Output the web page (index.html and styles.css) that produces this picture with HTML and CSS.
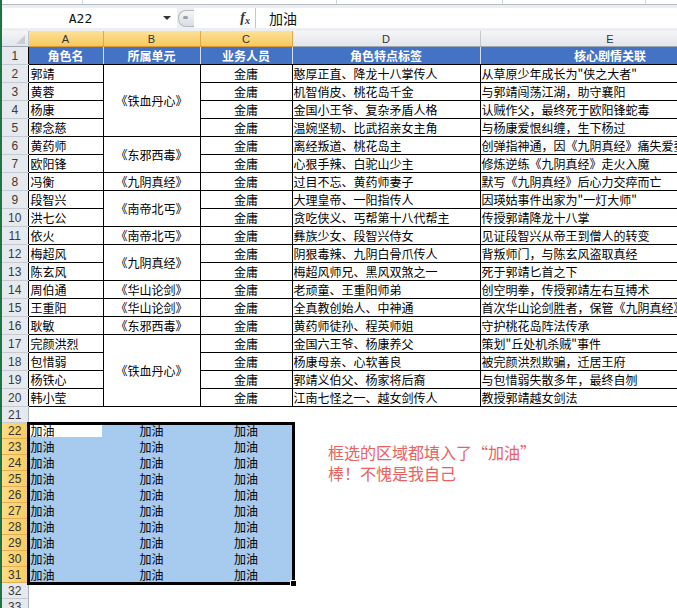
FILE: index.html
```html
<!DOCTYPE html>
<html lang="zh-CN">
<head>
  <meta charset="UTF-8">
  <title>金庸角色表</title>
  <link rel="stylesheet" href="styles.css">
</head>
<body>
  <div class="app">
    <div class="ribbon">
      <span class="seg s1"></span><span class="seg s2"></span><span class="seg s3"></span><span class="seg s4"></span>
    </div>
    <div class="fbar">
      <div class="namebox"><span class="ref">A22</span><span class="caret"></span></div>
      <div class="grip"><span class="dot"></span></div>
      <div class="fx"><i>f</i><i class="x">x</i></div>
      <div class="formula">加油</div>
    </div>

    <div class="sheet">
      <table class="grid">
        <colgroup>
          <col class="w-rh"><col class="w-a"><col class="w-b"><col class="w-c"><col class="w-d"><col class="w-e">
        </colgroup>
        <tr class="cols">
          <th class="corner"><span class="tri"></span></th>
          <th class="ch on">A</th><th class="ch on">B</th><th class="ch on">C</th><th class="ch">D</th><th class="ch">E</th>
        </tr>
        <tr class="d hd">
          <th class="rh">1</th><td>角色名</td><td>所属单元</td><td>业务人员</td><td>角色特点标签</td><td>核心剧情关联</td>
        </tr>
        <tr class="d"><th class="rh">2</th><td class="a">郭靖</td><td class="b" rowspan="4">《铁血丹心》</td><td class="c">金庸</td><td class="t">憨厚正直、降龙十八掌传人</td><td class="t">从草原少年成长为"侠之大者"</td></tr>
        <tr class="d"><th class="rh">3</th><td class="a">黄蓉</td><td class="c">金庸</td><td class="t">机智俏皮、桃花岛千金</td><td class="t">与郭靖闯荡江湖，助守襄阳</td></tr>
        <tr class="d"><th class="rh">4</th><td class="a">杨康</td><td class="c">金庸</td><td class="t">金国小王爷、复杂矛盾人格</td><td class="t">认贼作父，最终死于欧阳锋蛇毒</td></tr>
        <tr class="d"><th class="rh">5</th><td class="a">穆念慈</td><td class="c">金庸</td><td class="t">温婉坚韧、比武招亲女主角</td><td class="t">与杨康爱恨纠缠，生下杨过</td></tr>
        <tr class="d"><th class="rh">6</th><td class="a">黄药师</td><td class="b" rowspan="2">《东邪西毒》</td><td class="c">金庸</td><td class="t">离经叛道、桃花岛主</td><td class="t">创弹指神通，因《九阴真经》痛失爱妻</td></tr>
        <tr class="d"><th class="rh">7</th><td class="a">欧阳锋</td><td class="c">金庸</td><td class="t">心狠手辣、白驼山少主</td><td class="t">修炼逆练《九阴真经》走火入魔</td></tr>
        <tr class="d"><th class="rh">8</th><td class="a">冯衡</td><td class="b">《九阴真经》</td><td class="c">金庸</td><td class="t">过目不忘、黄药师妻子</td><td class="t">默写《九阴真经》后心力交瘁而亡</td></tr>
        <tr class="d"><th class="rh">9</th><td class="a">段智兴</td><td class="b" rowspan="2">《南帝北丐》</td><td class="c">金庸</td><td class="t">大理皇帝、一阳指传人</td><td class="t">因瑛姑事件出家为"一灯大师"</td></tr>
        <tr class="d"><th class="rh">10</th><td class="a">洪七公</td><td class="c">金庸</td><td class="t">贪吃侠义、丐帮第十八代帮主</td><td class="t">传授郭靖降龙十八掌</td></tr>
        <tr class="d"><th class="rh">11</th><td class="a">依火</td><td class="b">《南帝北丐》</td><td class="c">金庸</td><td class="t">彝族少女、段智兴侍女</td><td class="t">见证段智兴从帝王到僧人的转变</td></tr>
        <tr class="d"><th class="rh">12</th><td class="a">梅超风</td><td class="b" rowspan="2">《九阴真经》</td><td class="c">金庸</td><td class="t">阴狠毒辣、九阴白骨爪传人</td><td class="t">背叛师门，与陈玄风盗取真经</td></tr>
        <tr class="d"><th class="rh">13</th><td class="a">陈玄风</td><td class="c">金庸</td><td class="t">梅超风师兄、黑风双煞之一</td><td class="t">死于郭靖匕首之下</td></tr>
        <tr class="d"><th class="rh">14</th><td class="a">周伯通</td><td class="b">《华山论剑》</td><td class="c">金庸</td><td class="t">老顽童、王重阳师弟</td><td class="t">创空明拳，传授郭靖左右互搏术</td></tr>
        <tr class="d"><th class="rh">15</th><td class="a">王重阳</td><td class="b">《华山论剑》</td><td class="c">金庸</td><td class="t">全真教创始人、中神通</td><td class="t">首次华山论剑胜者，保管《九阴真经》</td></tr>
        <tr class="d"><th class="rh">16</th><td class="a">耿敏</td><td class="b">《东邪西毒》</td><td class="c">金庸</td><td class="t">黄药师徒孙、程英师姐</td><td class="t">守护桃花岛阵法传承</td></tr>
        <tr class="d"><th class="rh">17</th><td class="a">完颜洪烈</td><td class="b" rowspan="4">《铁血丹心》</td><td class="c">金庸</td><td class="t">金国六王爷、杨康养父</td><td class="t">策划"丘处机杀贼"事件</td></tr>
        <tr class="d"><th class="rh">18</th><td class="a">包惜弱</td><td class="c">金庸</td><td class="t">杨康母亲、心软善良</td><td class="t">被完颜洪烈欺骗，迁居王府</td></tr>
        <tr class="d"><th class="rh">19</th><td class="a">杨铁心</td><td class="c">金庸</td><td class="t">郭靖义伯父、杨家将后裔</td><td class="t">与包惜弱失散多年，最终自刎</td></tr>
        <tr class="d"><th class="rh">20</th><td class="a">韩小莹</td><td class="c">金庸</td><td class="t">江南七怪之一、越女剑传人</td><td class="t">教授郭靖越女剑法</td></tr>

        <tr class="e"><th class="rh">21</th><td></td><td></td><td></td><td></td><td></td></tr>
        <tr class="e"><th class="rh on">22</th><td class="s a active">加油</td><td class="s c">加油</td><td class="s c">加油</td><td></td><td></td></tr>
        <tr class="e"><th class="rh on">23</th><td class="s a">加油</td><td class="s c">加油</td><td class="s c">加油</td><td></td><td></td></tr>
        <tr class="e"><th class="rh on">24</th><td class="s a">加油</td><td class="s c">加油</td><td class="s c">加油</td><td></td><td></td></tr>
        <tr class="e"><th class="rh on">25</th><td class="s a">加油</td><td class="s c">加油</td><td class="s c">加油</td><td></td><td></td></tr>
        <tr class="e"><th class="rh on">26</th><td class="s a">加油</td><td class="s c">加油</td><td class="s c">加油</td><td></td><td></td></tr>
        <tr class="e"><th class="rh on">27</th><td class="s a">加油</td><td class="s c">加油</td><td class="s c">加油</td><td></td><td></td></tr>
        <tr class="e"><th class="rh on">28</th><td class="s a">加油</td><td class="s c">加油</td><td class="s c">加油</td><td></td><td></td></tr>
        <tr class="e"><th class="rh on">29</th><td class="s a">加油</td><td class="s c">加油</td><td class="s c">加油</td><td></td><td></td></tr>
        <tr class="e"><th class="rh on">30</th><td class="s a">加油</td><td class="s c">加油</td><td class="s c">加油</td><td></td><td></td></tr>
        <tr class="e"><th class="rh on">31</th><td class="s a">加油</td><td class="s c">加油</td><td class="s c">加油</td><td></td><td></td></tr>
        <tr class="e"><th class="rh">32</th><td></td><td></td><td></td><td></td><td></td></tr>
        <tr class="e"><th class="rh">33</th><td></td><td></td><td></td><td></td><td></td></tr>
      </table>

      <!-- selection frame around A22:C31 with its fill handle -->
      <div class="selection"><span class="handle"></span></div>

      <!-- floating text box -->
      <div class="note">框选的区域都填入了“加油”<br>棒！不愧是我自己</div>
    </div>
  </div>
</body>
</html>
```

FILE: styles.css
```css
body {
  margin: 0;
  background: #fff;
  overflow: hidden;
  font-family: "Noto Sans CJK SC", sans-serif;
}
.app {
  border-left: 2px solid #217346;
  height: 608px;
  overflow: hidden;
}

/* strip left from the ribbon */
.ribbon {
  display: flex;
  height: 4px;
  border-bottom: 1px solid #b6bcc4;
}
.seg {
  border-right: 1px solid #cfd4da;
}
.s1 { width: 80px; }
.s2 { width: 253px; }
.s3 { width: 165px; }
.s4 { width: 142px; }

/* formula bar */
.fbar {
  display: flex;
  align-items: stretch;
  height: 20px;
  padding: 3px 0 3px 1px;
  background: #eceef1;
}
.namebox {
  display: flex;
  align-items: center;
  width: 174px;
  background: #fff;
}
.ref {
  width: 155px;
  text-align: center;
  font-family: "DejaVu Sans Mono", monospace;
  font-size: 13px;
  color: #111;
}
.caret {
  width: 0;
  height: 0;
  margin-left: 5px;
  border-left: 4px solid transparent;
  border-right: 4px solid transparent;
  border-top: 4px solid #333;
}
.grip {
  position: relative;
  width: 15px;
  margin: 2px 0 1px 1px;
  border: 1px solid #b4bac2;
  border-right: none;
  border-radius: 8px 0 0 8px;
  background: linear-gradient(#f6f7f8, #d9dde2);
}
.grip .dot {
  position: absolute;
  left: 4px;
  top: 5px;
  width: 5px;
  height: 3px;
  border-radius: 2px;
  background: #9aa1aa;
}
.fx {
  width: 56px;
  display: flex;
  justify-content: flex-end;
  align-items: center;
  padding-right: 5px;
  background: #fff;
  font-family: "Liberation Serif", serif;
  font-size: 14px;
  font-weight: bold;
  color: #333;
  border-right: 1px solid #c4c9cf;
}
.fx .x {
  font-size: 10px;
  margin-top: 4px;
}
.formula {
  flex: 1;
  background: #fff;
  padding-left: 13px;
  font-size: 14px;
  line-height: 20px;
  color: #111;
}

/* worksheet */
.sheet {
  position: relative;
}
.grid {
  table-layout: fixed;
  width: 738px;
  border-collapse: collapse;
  font-size: 12px;
  color: #000;
}
.w-rh { width: 26px; }
.w-a { width: 75px; }
.w-b { width: 97px; }
.w-c { width: 92px; }
.w-d { width: 188px; }
.w-e { width: 260px; }

.grid td {
  padding: 0;
  white-space: nowrap;
  overflow: hidden;
}

.cols th {
  height: 15px;
  padding: 0;
  font-family: "Liberation Sans", sans-serif;
  font-size: 11px;
  font-weight: normal;
  color: #333;
  background: linear-gradient(#f4f5f7, #e2e5ea);
  border-right: 1px solid #c3c8cf;
  border-bottom: 1px solid #9ea6b0;
}
.cols th.on {
  background: linear-gradient(#fbe19a, #f6c95c);
  border-right-color: #e0a94c;
  border-bottom-color: #d99a35;
}
.corner {
  position: relative;
}
.tri {
  position: absolute;
  right: 3px;
  bottom: 2px;
  border-left: 9px solid transparent;
  border-bottom: 9px solid #c9ced5;
}

.rh {
  padding: 0;
  font-family: "Liberation Sans", sans-serif;
  font-size: 12px;
  font-weight: normal;
  color: #3a3a3a;
  background: #e6e9ee;
  border-bottom: 1px solid #c6cbd2;
  border-right: 1px solid #a9b1bc;
}
.rh.on {
  background: linear-gradient(90deg, #fbdc85, #f7cb5f);
  color: #333;
  border-bottom-color: #e4b056;
  border-right-color: #c98f2c;
}

/* rows 1-20: bordered table */
.d {
  height: 18px;
}
.d td {
  border: 1px solid #000;
}
.d .rh {
  border-right-color: #000;
}
.hd td {
  background: #4472c4;
  color: #fff;
  font-weight: bold;
  text-align: center;
  border-color: #000 #d8e0ef #000 #d8e0ef;
}
.a { padding-left: 2px !important; }
.b, .c { text-align: center; }
.t { padding-left: 1px !important; }

/* rows 21 and below */
.e {
  height: 16px;
}
.e td {
  line-height: 15px;
}
.s {
  background: #a6cbef;
}
.s.active {
  background: linear-gradient(#fff, #fff) no-repeat 1px 1px / 72px 13px, #a6cbef;
}

.selection {
  position: absolute;
  left: 25px;
  top: 391px;
  width: 268px;
  height: 163px;
  box-sizing: border-box;
  border: 3px solid #000;
}
.handle {
  position: absolute;
  right: -5px;
  bottom: -5px;
  width: 5px;
  height: 5px;
  background: #000;
  border: 1px solid #fff;
}

.note {
  position: absolute;
  left: 326px;
  top: 411px;
  font-size: 16px;
  line-height: 21px;
  color: #e8625f;
}
```
